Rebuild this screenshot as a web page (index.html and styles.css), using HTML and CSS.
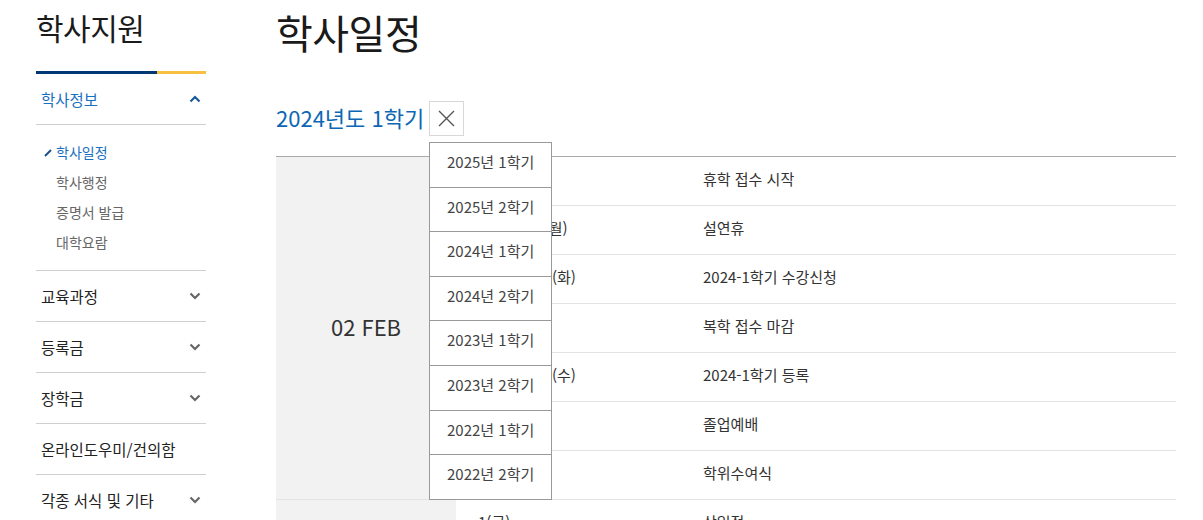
FILE: index.html
```html
<!DOCTYPE html>
<html lang="ko">
<head>
<meta charset="utf-8">
<title>학사일정</title>
<link rel="stylesheet" href="styles.css">
</head>
<body>
<div class="page">
  <aside class="side">
    <h2 class="side-title">학사지원</h2>
    <div class="side-bar"><span class="bar-navy"></span><span class="bar-yellow"></span></div>
    <nav class="menu">
      <div class="menu-item open">
        <div class="menu-head active">
          <span>학사정보</span>
          <svg class="chev" width="12" height="8" viewBox="0 0 12 8"><path d="M1.5 6.5 L6 2 L10.5 6.5" fill="none" stroke="#1b5a98" stroke-width="2.2"/></svg>
        </div>
        <ul class="sub">
          <li class="sub-item current"><svg class="pen" width="8" height="8" viewBox="0 0 8 8"><path d="M1 7 L7 1" stroke="#1b4f8a" stroke-width="2"/></svg>학사일정</li>
          <li class="sub-item">학사행정</li>
          <li class="sub-item">증명서 발급</li>
          <li class="sub-item">대학요람</li>
        </ul>
      </div>
      <div class="menu-item">
        <div class="menu-head"><span>교육과정</span><svg class="chev" width="12" height="8" viewBox="0 0 12 8"><path d="M1.5 1.5 L6 6 L10.5 1.5" fill="none" stroke="#666" stroke-width="2.2"/></svg></div>
      </div>
      <div class="menu-item">
        <div class="menu-head"><span>등록금</span><svg class="chev" width="12" height="8" viewBox="0 0 12 8"><path d="M1.5 1.5 L6 6 L10.5 1.5" fill="none" stroke="#666" stroke-width="2.2"/></svg></div>
      </div>
      <div class="menu-item">
        <div class="menu-head"><span>장학금</span><svg class="chev" width="12" height="8" viewBox="0 0 12 8"><path d="M1.5 1.5 L6 6 L10.5 1.5" fill="none" stroke="#666" stroke-width="2.2"/></svg></div>
      </div>
      <div class="menu-item">
        <div class="menu-head"><span>온라인도우미/건의함</span></div>
      </div>
      <div class="menu-item">
        <div class="menu-head"><span>각종 서식 및 기타</span><svg class="chev" width="12" height="8" viewBox="0 0 12 8"><path d="M1.5 1.5 L6 6 L10.5 1.5" fill="none" stroke="#666" stroke-width="2.2"/></svg></div>
      </div>
    </nav>
  </aside>

  <main class="main">
    <h1 class="title">학사일정</h1>
    <div class="term-row">
      <h3 class="term">2024년도 1학기</h3>
      <div class="term-select">
        <button class="close-btn" type="button" aria-label="닫기">
          <svg width="17" height="17" viewBox="0 0 17 17"><path d="M1 1 L16 16 M16 1 L1 16" stroke="#555" stroke-width="1.4" fill="none"/></svg>
        </button>
        <ul class="term-list">
          <li>2025년 1학기</li>
          <li>2025년 2학기</li>
          <li>2024년 1학기</li>
          <li>2024년 2학기</li>
          <li>2023년 1학기</li>
          <li>2023년 2학기</li>
          <li>2022년 1학기</li>
          <li>2022년 2학기</li>
        </ul>
      </div>
    </div>

    <table class="cal">
      <colgroup><col class="c-month"><col class="c-date"><col class="c-event"></colgroup>
      <tbody>
        <tr><td class="month" rowspan="7">02 FEB</td><td class="date">1(목)</td><td class="event">휴학 접수 시작</td></tr>
        <tr><td class="date">9(금) ~ 12(월)</td><td class="event">설연휴</td></tr>
        <tr><td class="date">19(월) ~ 20(화)</td><td class="event">2024-1학기 수강신청</td></tr>
        <tr><td class="date">23(금)</td><td class="event">복학 접수 마감</td></tr>
        <tr><td class="date">27(화) ~ 28(수)</td><td class="event">2024-1학기 등록</td></tr>
        <tr><td class="date">15(목)</td><td class="event">졸업예배</td></tr>
        <tr><td class="date">16(금)</td><td class="event">학위수여식</td></tr>
        <tr><td class="month" rowspan="2">03 MAR</td><td class="date">1(금)</td><td class="event">삼일절</td></tr>
        <tr><td class="date">4(월)</td><td class="event">개강</td></tr>
      </tbody>
    </table>
  </main>
</div>
</body>
</html>
```

FILE: styles.css
```css
* { box-sizing: border-box; }
html, body { margin: 0; padding: 0; background: #fff; }
body {
  font-family: "Noto Sans CJK KR", "Noto Sans", sans-serif;
  color: #222;
  overflow: hidden;
  height: 520px;
}
.page {
  display: flex;
  gap: 70px;
  padding-left: 36px;
}
.side { width: 170px; flex: none; }
.side-title {
  margin: 0;
  padding-top: 5px;
  font-size: 30px;
  font-weight: 400;
  line-height: 44px;
  height: 71px;
  color: #1a1a1a;
  letter-spacing: -0.5px;
}
.side-bar { display: flex; height: 3px; }
.bar-navy { width: 121px; background: #003876; }
.bar-yellow { flex: 1; background: #f8c042; }
.menu-item { border-bottom: 1px solid #cfcfcf; }
.menu-head {
  display: flex;
  align-items: center;
  justify-content: space-between;
  height: 50px;
  padding: 0 5px 1px;
  font-size: 15.5px;
  color: #222;
}
.menu-head.active { color: #1a70c0; }
.menu-head.active + .sub { border-top: 1px solid #cfcfcf; }
.sub {
  list-style: none;
  margin: 0;
  padding: 12px 0 13px 20px;
}
.sub-item {
  position: relative;
  font-size: 14px;
  line-height: 30px;
  color: #666;
}
.sub-item.current { color: #1a70c0; }
.pen { position: absolute; left: -12px; top: 12px; }

.main { width: 900px; flex: none; }
.title {
  margin: 0;
  padding-top: 6px;
  font-size: 40px;
  font-weight: 400;
  line-height: 52px;
  height: 101px;
  color: #1a1a1a;
  letter-spacing: -0.5px;
}
.term-row {
  display: flex;
  align-items: center;
  gap: 5px;
  height: 35px;
}
.term {
  margin: 0;
  padding-bottom: 4px;
  font-size: 22px;
  font-weight: 400;
  color: #0d67b5;
  letter-spacing: 0;
}
.term-select { position: relative; }
.close-btn {
  display: flex;
  align-items: center;
  justify-content: center;
  width: 35px;
  height: 35px;
  padding: 0;
  border: 1px solid #d8d8d8;
  background: #fff;
}
.term-list {
  position: absolute;
  z-index: 5;
  top: 41px;
  left: 0;
  width: 123px;
  margin: 0;
  padding: 0;
  list-style: none;
  background: #fff;
  border: 1px solid #999;
}
.term-list li {
  height: 44.6px;
  line-height: 38px;
  text-align: center;
  font-size: 15px;
  color: #444;
  border-top: 1px solid #999;
}
.term-list li:first-child { border-top: 0; height: 43.6px; }

.cal {
  width: 900px;
  margin-top: 20px;
  border-collapse: collapse;
  border-top: 1px solid #aaa;
  font-size: 15px;
  color: #333;
}
.c-month { width: 180px; }
.c-date { width: 247px; }
.cal td {
  height: 49px;
  padding: 0 0 5px;
  border-bottom: 1px solid #e3e3e3;
  vertical-align: middle;
}
.cal .month {
  background: #f2f2f2;
  text-align: center;
  font-size: 22px;
  color: #333;
}
.cal .date { padding-left: 22px; }
```
